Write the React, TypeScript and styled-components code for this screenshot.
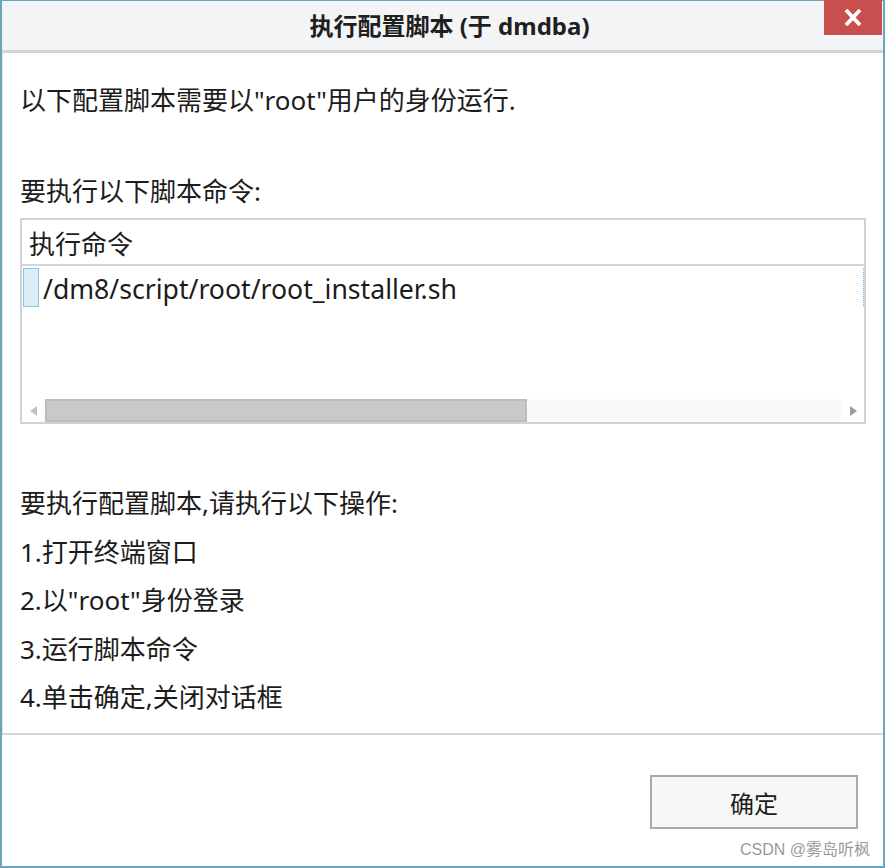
import React from "react";
import styled, { createGlobalStyle } from "styled-components";

const GlobalStyle = createGlobalStyle`
  html, body { margin: 0; padding: 0; background: #ffffff; }
  body { font-family: "Noto Sans", "Noto Sans CJK SC", sans-serif; }
  * { box-sizing: border-box; }
`;

const Window = styled.div`
  position: relative;
  width: 885px;
  height: 868px;
  border: 2px solid #6ba4bd;
  border-top-width: 1px;
  display: flex;
  flex-direction: column;
  background: #ffffff;
  color: #1c1c1c;
  font-family: "Noto Sans", "Noto Sans CJK SC", sans-serif;
`;

const TitleBar = styled.div`
  position: relative;
  height: 52px;
  flex: 0 0 auto;
  background: #f3f4f6;
  display: flex;
  align-items: center;
  justify-content: center;
  padding-left: 14px;
  padding-bottom: 2px;
  border-bottom: 3px solid #d2d3d5;
`;

const Title = styled.div`
  font-size: 24px;
  font-weight: 700;
  color: #1f1f1f;
`;

const CloseButton = styled.div`
  position: absolute;
  top: -1px;
  right: 1px;
  width: 58px;
  height: 35px;
  background: #c94f4f;
  display: flex;
  align-items: center;
  justify-content: center;
`;

const ContentPanel = styled.div`
  flex: 0 0 auto;
  height: 682px;
  border-left: 1px solid #e2e2e2;
  border-bottom: 2px solid #d6d6d6;
  padding: 23px 17px 0 17px;
  display: flex;
  flex-direction: column;
`;

const Line = styled.div<{ $mt?: number }>`
  font-size: 26px;
  line-height: 48px;
  height: 48px;
  white-space: nowrap;
  margin-top: ${(p) => p.$mt ?? 0}px;
`;

const ListLine = styled(Line)`
  line-height: 48.5px;
  height: 48.5px;
`;

const Table = styled.div`
  margin-top: 3px;
  height: 206px;
  border: 2px solid #d2d2d2;
  display: flex;
  flex-direction: column;
  background: #ffffff;
`;

const HeaderRow = styled.div`
  height: 46px;
  flex: 0 0 auto;
  border-bottom: 2px solid #d4d4d4;
  display: flex;
  align-items: center;
  padding-left: 7px;
  padding-top: 2px;
  font-size: 26px;
`;

const Body = styled.div`
  flex: 1 1 auto;
  padding-top: 2px;
`;

const Row = styled.div`
  height: 39px;
  display: flex;
  align-items: center;
  margin-left: 1px;
  border-right: 1px dotted #6fb3de;
`;

const SelectCell = styled.div`
  width: 16px;
  height: 39px;
  background: #dbecf6;
  border: 1px solid #8ec4e2;
  margin-right: 4px;
`;

const RowText = styled.div`
  font-size: 26.6px;
  line-height: 39px;
  padding-top: 4px;
  white-space: nowrap;
`;

const ScrollBar = styled.div`
  height: 23px;
  flex: 0 0 auto;
  display: flex;
  align-items: stretch;
  background: #fafafa;
`;

const ArrowBox = styled.div<{ $w: number }>`
  width: ${(p) => p.$w}px;
  flex: 0 0 auto;
  display: flex;
  align-items: center;
  justify-content: center;
  background: #ffffff;
`;

const Thumb = styled.div`
  width: 482px;
  flex: 0 0 auto;
  background: #c9c9c9;
  border: 2px solid #bdbdbd;
`;

const Track = styled.div`
  flex: 1 1 auto;
  background: #fafafa;
`;

const Footer = styled.div`
  flex: 1 1 auto;
  display: flex;
  justify-content: flex-end;
  align-items: flex-start;
  padding-top: 40px;
  padding-right: 25px;
`;

const OkButton = styled.div`
  width: 208px;
  height: 54px;
  border: 2px solid #a9a9a9;
  background: #f7f7f7;
  display: flex;
  align-items: center;
  justify-content: center;
  font-size: 24px;
  color: #1c1c1c;
`;

const Watermark = styled.div`
  position: absolute;
  right: 13px;
  bottom: 6px;
  font-size: 16px;
  color: #9a9a9a;
  font-family: "Liberation Sans", "Noto Sans CJK SC", sans-serif;
  white-space: nowrap;
`;

export default function App() {
  return (
    <>
      <GlobalStyle />
      <Window>
        <TitleBar>
          <Title>执行配置脚本 (于 dmdba)</Title>
          <CloseButton>
            <svg width="18" height="17" viewBox="0 0 18 17">
              <path d="M2 1 L16 16 M16 1 L2 16" stroke="#ffffff" strokeWidth="3.8" />
            </svg>
          </CloseButton>
        </TitleBar>
        <ContentPanel>
          <Line>以下配置脚本需要以"root"用户的身份运行.</Line>
          <Line $mt={43}>要执行以下脚本命令:</Line>
          <Table>
            <HeaderRow>执行命令</HeaderRow>
            <Body>
              <Row>
                <SelectCell />
                <RowText>/dm8/script/root/root_installer.sh</RowText>
              </Row>
            </Body>
            <ScrollBar>
              <ArrowBox $w={23}>
                <svg width="8" height="10" viewBox="0 0 8 10">
                  <path d="M7 0 L0 5 L7 10 Z" fill="#c2c2c2" />
                </svg>
              </ArrowBox>
              <Thumb />
              <Track />
              <ArrowBox $w={23}>
                <svg width="8" height="10" viewBox="0 0 8 10">
                  <path d="M1 0 L8 5 L1 10 Z" fill="#9a9a9a" />
                </svg>
              </ArrowBox>
            </ScrollBar>
          </Table>
          <ListLine $mt={55}>要执行配置脚本,请执行以下操作:</ListLine>
          <ListLine>1.打开终端窗口</ListLine>
          <ListLine>2.以"root"身份登录</ListLine>
          <ListLine>3.运行脚本命令</ListLine>
          <ListLine>4.单击确定,关闭对话框</ListLine>
        </ContentPanel>
        <Footer>
          <OkButton>确定</OkButton>
        </Footer>
        <Watermark>CSDN @雾岛听枫</Watermark>
      </Window>
    </>
  );
}
